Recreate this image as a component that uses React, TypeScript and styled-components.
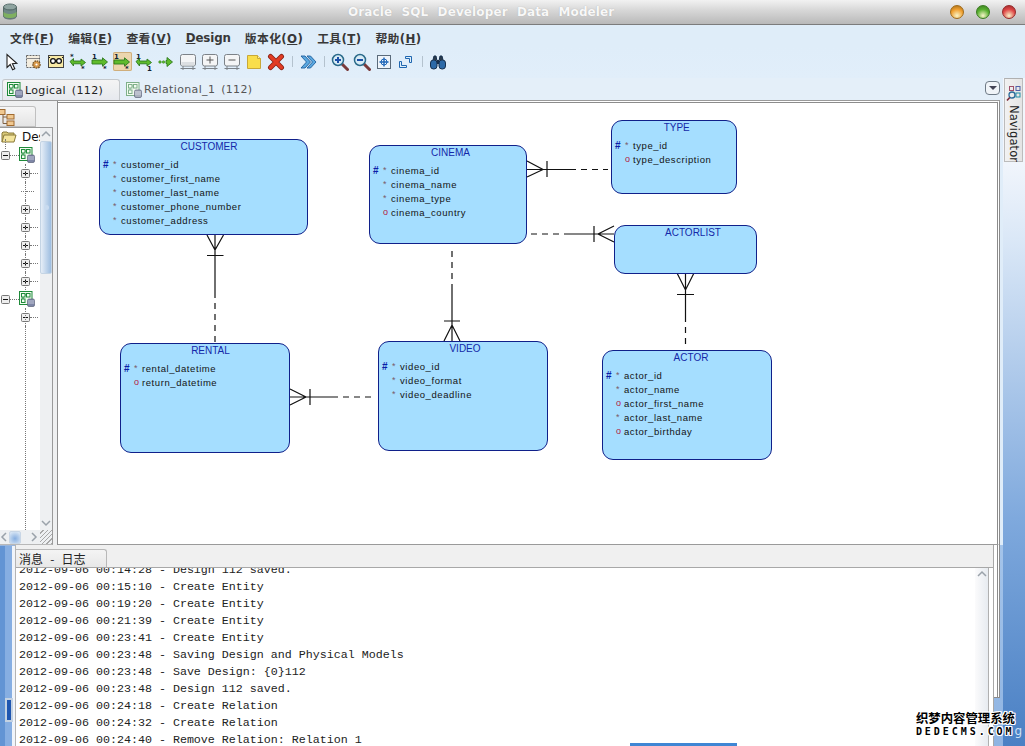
import React from "react";
import styled, { createGlobalStyle } from "styled-components";

const Global = createGlobalStyle`
  html, body { margin: 0; padding: 0; background: #e0edf9; overflow: hidden; }
  * { box-sizing: border-box; }
  svg { flex: none; }
`;

const Window = styled.div`
  position: relative;
  width: 1025px;
  height: 746px;
  overflow: hidden;
  display: flex;
  flex-direction: column;
  font-family: "DejaVu Sans", "Noto Sans CJK SC", sans-serif;
  background: #e0edf9;
`;

const TitleBar = styled.header`
  height: 25px;
  flex: none;
  display: flex;
  align-items: center;
  padding: 0 9px 1px 2px;
  background: linear-gradient(#f2f2f2, #d6d6d6 45%, #b9b9b9);
  border-bottom: 1px solid #7c7c7c;
`;
const TitleText = styled.div`
  margin-left: 330px;
  font-size: 12px;
  font-weight: 700;
  letter-spacing: 0.12px;
  word-spacing: 4.9px;
  color: #f8f8f8;
  text-shadow: 0 0 1px #a8a8a8;
  white-space: pre;
`;
const WindowButtons = styled.div`
  margin-left: auto;
  display: flex;
  gap: 12px;
`;
const WindowButton = styled.span<{ $c: string; $d: string }>`
  width: 14px;
  height: 14px;
  border-radius: 50%;
  border: 1px solid ${(p) => p.$d};
  background: radial-gradient(circle at 50% 80%, #f8f4c8 0, ${(p) => p.$c} 55%, ${(p) => p.$d} 100%);
`;

const MenuBar = styled.nav`
  height: 22px;
  flex: none;
  display: flex;
  align-items: center;
  gap: 14px;
  padding: 3px 0 0 10px;
  background: #dfedf9;
`;
const MenuItem = styled.span<{ $latin?: boolean }>`
  font-size: 11.8px;
  font-weight: 700;
  color: #383838;
  white-space: pre;
  letter-spacing: ${(p) => (p.$latin ? "-0.1px" : "0.35px")};
`;

const ToolBar = styled.div`
  height: 31px;
  flex: none;
  display: flex;
  align-items: center;
  padding: 0 0 2px 1px;
  background: linear-gradient(#dfedf9, #e1eefa);
`;
const ToolSlot = styled.div`
  width: 22px;
  height: 29px;
  display: flex;
  align-items: center;
  justify-content: center;
`;
const ToolFace = styled.div<{ $active?: boolean }>`
  width: 19px;
  height: 19px;
  display: flex;
  align-items: center;
  justify-content: center;
  border-radius: 2px;
  background: ${(p) => (p.$active ? "#ecd6ae" : "transparent")};
  box-shadow: ${(p) => (p.$active ? "inset 0 0 0 1px #cfae7c" : "none")};
`;
const ToolSep = styled.div`
  width: 10px;
  display: flex;
  justify-content: center;
  &::before {
    content: "";
    width: 1px;
    height: 11px;
    background: #b4c2ce;
  }
`;

const Workspace = styled.div`
  flex: 1;
  min-height: 0;
  display: flex;
`;
const Main = styled.div`
  width: 1003px;
  flex: none;
  display: flex;
  flex-direction: column;
`;
const TabRow = styled.div`
  height: 23px;
  flex: none;
  width: 1000px;
  display: flex;
  align-items: flex-end;
  padding-left: 2px;
  background: #e4eff9;
  border-bottom: 1px solid #9a9a9a;
`;
const DocTab = styled.div<{ $active?: boolean }>`
  height: 21px;
  display: flex;
  align-items: center;
  gap: 2px;
  padding: 0 ${(p) => (p.$active ? "20px" : "10px")} 0 ${(p) => (p.$active ? "4px" : "6px")};
  width: ${(p) => (p.$active ? "118px" : "auto")};
  margin-right: ${(p) => (p.$active ? "0" : "auto")};
  font-size: 11px;
  letter-spacing: 0.35px;
  word-spacing: 2px;
  white-space: pre;
  color: ${(p) => (p.$active ? "#222" : "#555")};
  background: ${(p) => (p.$active ? "linear-gradient(#f4f4f4, #e6e9ee)" : "transparent")};
  border: ${(p) => (p.$active ? "1px solid #c4c8cc" : "0")};
  border-bottom: 0;
  border-radius: 3px 3px 0 0;
`;
const DropButton = styled.div`
  width: 15px;
  height: 14px;
  margin: 0 0 5px 0;
  display: flex;
  align-items: center;
  justify-content: center;
  border: 1px solid #6e7a86;
  border-radius: 4px;
  background: #f0f4f8;
  &::before {
    content: "";
    border-style: solid;
    border-width: 4px 4px 0 4px;
    border-color: #445 transparent transparent transparent;
  }
`;

const TopArea = styled.div`
  height: 444px;
  flex: none;
  display: flex;
`;
const NavPanel = styled.aside`
  width: 58px;
  flex: none;
  display: flex;
  flex-direction: column;
  background: #eff0f1;
  border-right: 1px solid #8e8e8e;
`;
const NavTabs = styled.div`
  height: 26px;
  flex: none;
  padding-top: 5px;
`;
const NavTab = styled.div`
  width: 36px;
  height: 21px;
  padding-top: 2px;
  background: linear-gradient(#f6f6f6, #e4e4e4);
  border: 1px solid #c0c0c0;
  border-left: 0;
  border-radius: 0 3px 0 0;
`;
const NavFrame = styled.div`
  width: 53px;
  flex: 1;
  min-height: 0;
  display: grid;
  grid-template-columns: 40px 12px;
  grid-template-rows: 1fr 14px;
  border-top: 1px solid #9a9a9a;
  border-right: 1px solid #9a9a9a;
  border-bottom: 1px solid #b8b8b8;
`;
const Tree = styled.div`
  display: flex;
  flex-direction: column;
  overflow: hidden;
  background: #fff;
`;
const TreeRow = styled.div<{ $indent?: number; $guide?: boolean; $stem?: boolean }>`
  position: relative;
  height: 18px;
  flex: none;
  display: flex;
  align-items: center;
  padding-left: ${(p) => (p.$indent ? 21 : 1)}px;
  white-space: nowrap;
  font-size: 12px;
  color: #111;
  &::before {
    content: ${(p) => (p.$guide ? '""' : "none")};
    position: absolute;
    left: 25px;
    top: 0;
    bottom: 0;
    border-left: 1px dotted #777;
  }
  &::after {
    content: ${(p) => (p.$stem ? '""' : "none")};
    position: absolute;
    left: 5px;
    top: -7px;
    height: 10px;
    border-left: 1px dotted #777;
  }
`;
const TreeGuide = styled.div`
  flex: 1;
  margin-left: 25px;
  border-left: 1px dotted #777;
`;
const Dots = styled.span<{ $w?: number }>`
  width: ${(p) => p.$w ?? 8}px;
  flex: none;
  height: 0;
  border-top: 1px dotted #777;
`;
const FolderLabel = styled.span`
  margin-left: 5px;
`;
const VScroll = styled.div`
  display: flex;
  flex-direction: column;
  background: #eef0f2;
`;
const ArrowCell = styled.div<{ $w?: number }>`
  height: 13px;
  width: ${(p) => (p.$w ? `${p.$w}px` : "auto")};
  flex: none;
  display: flex;
  align-items: center;
  justify-content: center;
`;
const VThumb = styled.div`
  height: 133px;
  flex: none;
  display: flex;
  align-items: center;
  justify-content: center;
  background: linear-gradient(90deg, #e6eef7, #9dbde0);
  border: 1px solid #c4d4e4;
  border-radius: 2px;
  &::before {
    content: "";
    width: 5px;
    height: 5px;
    border-radius: 50%;
    background: #c9dbef;
  }
`;
const VTrack = styled.div`
  flex: 1;
`;
const HScroll = styled.div`
  grid-column: 1 / 2;
  display: flex;
  align-items: center;
  background: #eef0f2;
`;
const HThumb = styled.div`
  width: 12px;
  height: 13px;
  flex: none;
  background: radial-gradient(circle at 50% 60%, #86aee0, #d6e4f4 85%);
  border: 1px solid #c8d6e6;
  border-radius: 2px;
`;
const HTrack = styled.div`
  width: 8px;
  flex: none;
`;
const Grip = styled.div`
  background: repeating-linear-gradient(135deg, #eef0f2 0 2px, #a8a8a8 2px 3px);
`;

const Canvas = styled.main`
  position: relative;
  flex: 1;
  min-width: 0;
  width: 0;
  margin-right: 3px;
  background: #fff;
  border-top: 1px solid #fff;
  border-right: 3px double #8c8c8c;
  border-bottom: 1px solid #9a9a9a;
  box-shadow: inset 0 1px #8c8c8c;
  overflow: hidden;
`;
const Links = styled.svg`
  position: absolute;
  left: 0;
  top: 0;
`;
const Entity = styled.div<{ $x: number; $y: number; $w: number; $h: number }>`
  position: absolute;
  left: ${(p) => p.$x}px;
  top: ${(p) => p.$y}px;
  width: ${(p) => p.$w}px;
  height: ${(p) => p.$h}px;
  background: #a5deff;
  border: 1px solid #10208a;
  border-radius: 11px;
  font-family: "Liberation Sans", Arial, sans-serif;
`;
const EntityTitle = styled.div<{ $shift: number }>`
  height: 13px;
  line-height: 13px;
  margin-bottom: 4px;
  text-align: center;
  padding-left: ${(p) => p.$shift * 2}px;
  font-size: 10px;
  color: #1428a8;
`;
const AttrRow = styled.div`
  height: 14px;
  display: grid;
  grid-template-columns: 10px 8px 1fr;
  align-items: center;
  padding-left: 3px;
  font-size: 9.5px;
  letter-spacing: 0.58px;
  color: #141414;
  white-space: nowrap;
`;
const KeyMark = styled.span`
  font-size: 10px;
  font-weight: 700;
  letter-spacing: 0;
  color: #0c1ea8;
`;
const ReqMark = styled.span<{ $optional: boolean }>`
  font-size: 9px;
  letter-spacing: 0;
  color: ${(p) => (p.$optional ? "#b3203f" : "#7a5a6a")};
`;

const BottomArea = styled.div`
  flex: 1;
  min-height: 0;
  display: flex;
`;
const LeftGutter = styled.div`
  position: relative;
  width: 15px;
  flex: none;
  background: linear-gradient(90deg, #6294d4 0 5px, #86aee2 5px 12px, #f0f4fa 12px);
  border-top: 1px solid #9ab6dc;
`;
const GutterThumb = styled.div`
  position: absolute;
  left: 7px;
  top: 154px;
  width: 4px;
  height: 20px;
  background: #1f56b0;
  box-shadow: 0 0 0 2px #c4d2e2;
`;
const LogPanel = styled.section`
  width: 979px;
  flex: none;
  display: flex;
  flex-direction: column;
  background: #fff;
  border-left: 1px solid #b4b4b4;
  border-right: 1px solid #a8a8a8;
`;
const LogHeader = styled.div`
  height: 23px;
  flex: none;
  padding-top: 4px;
  background: #f0f0f0;
  border-bottom: 1px solid #a8a8a8;
  position: relative;
  z-index: 1;
`;
const LogTab = styled.div`
  width: 91px;
  height: 18px;
  line-height: 18px;
  padding-left: 3px;
  font-family: "Noto Sans CJK SC", sans-serif;
  font-size: 12px;
  word-spacing: 4.5px;
  white-space: pre;
  color: #222;
  background: linear-gradient(#f4f4f4, #e8e8e8);
  border-top: 1px solid #b8b8b8;
  border-right: 1px solid #b8b8b8;
  border-radius: 0 3px 0 0;
`;
const LogBody = styled.div`
  flex: 1;
  min-height: 0;
  display: flex;
  overflow: hidden;
  padding-right: 4px;
`;
const LogList = styled.div`
  flex: 1;
  min-width: 0;
  margin-top: -6px;
  padding-left: 3px;
  font-family: "Liberation Mono", "Courier New", monospace;
  font-size: 11.67px;
  line-height: 17px;
  color: #222;
  white-space: pre;
`;
const LogScroll = styled.div`
  width: 14px;
  flex: none;
  background: linear-gradient(90deg, #fbfbfc, #e7ebf0);
  border-right: 1px solid #b0b0b0;
`;
const RightGutter = styled.div`
  flex: 1;
  background: linear-gradient(#a4c4ea, #8fb4e2);
`;
const FrameEnd = styled.div`
  width: 6px;
  height: 153px;
  background: #fff;
  border-right: 3px double #8c8c8c;
  border-bottom: 1px solid #8c8c8c;
`;
const SideStrip = styled.aside`
  flex: 1;
  display: flex;
  flex-direction: column;
  align-items: flex-start;
  background: linear-gradient(#f2f6fc 80px, #dbe8f7 160px, #7fa9dd 440px, #4a80c4 668px);
`;
const NavigatorTab = styled.div`
  width: 19px;
  height: 84px;
  margin-left: 1px;
  display: flex;
  flex-direction: column;
  align-items: center;
  padding-top: 6px;
  gap: 3px;
  background: linear-gradient(90deg, #f2f2f2, #e4e4e4);
  border: 1px solid #bcbcbc;
  border-top-color: #b0b0b0;
`;
const NavigatorLabel = styled.span`
  writing-mode: vertical-rl;
  font-size: 11.5px;
  letter-spacing: 0.1px;
  color: #222;
`;

const BlueSliver = styled.div`
  position: absolute;
  left: 630px;
  bottom: 0;
  width: 107px;
  height: 3px;
  background: #3f86d4;
  z-index: 3;
`;
const Watermark = styled.div`
  position: absolute;
  right: 10px;
  bottom: 8px;
  z-index: 4;
  display: flex;
  flex-direction: column;
  align-items: flex-start;
  line-height: 13px;
  color: #000;
  text-shadow: 1px 0 #fff, -1px 0 #fff, 0 1px #fff, 0 -1px #fff, 1px 1px #fff, -1px -1px #fff, 1px -1px #fff, -1px 1px #fff;
`;
const WatermarkCn = styled.span`
  font-family: "Noto Sans CJK SC", sans-serif;
  font-size: 12.4px;
  font-weight: 700;
`;
const WatermarkEn = styled.span`
  font-family: "DejaVu Sans Mono", monospace;
  font-size: 10px;
  font-weight: 700;
  letter-spacing: 2.95px;
`;
const Stray = styled.span`
  position: absolute;
  right: 3px;
  bottom: 8px;
  z-index: 3;
  font-size: 12px;
  color: #cfe0f4;
`;

/* ---------- icons ---------- */
const S = ({ children, size = 18 }: { children: React.ReactNode; size?: number }) => (
  <svg width={size} height={size} viewBox="0 0 18 18" fill="none">
    {children}
  </svg>
);

const AppIcon = () => (
  <svg width="16" height="18" viewBox="0 0 16 18">
    <ellipse cx="8" cy="4" rx="6.5" ry="3" fill="#8fa4a0" stroke="#5c7270" />
    <path d="M1.5 4v9c0 2 3 3 6.5 3s6.5-1 6.5-3V4c0 2-3 3-6.5 3S1.5 6 1.5 4z" fill="#6f8886" stroke="#566a68" />
    <path d="M1.5 8c0 2 3 3 6.5 3s6.5-1 6.5-3v4c0 2-3 3-6.5 3s-6.5-1-6.5-3z" fill="#7fb060" />
  </svg>
);

const ModelIcon = ({ muted }: { muted?: boolean }) => {
  const g = muted ? "#7fb08a" : "#1f8a3a";
  return (
    <svg width="16" height="16" viewBox="0 0 16 16" fill="none">
      <rect x="0.5" y="0.5" width="12.5" height="13" fill="#f2fbf0" stroke={g} />
      <rect x="2.5" y="2.5" width="3.5" height="3.5" stroke={g} />
      <rect x="7.5" y="2.5" width="3.5" height="3.5" stroke={g} />
      <rect x="2.5" y="8" width="3.5" height="3.5" stroke={g} />
      <path d="M6 4h1.5M4 6v2" stroke={g} />
      <rect x="8.5" y="8" width="7" height="7.5" rx="1.5" fill={muted ? "#a9b0bd" : "#7e86a6"} stroke="#5a6078" strokeWidth="0.7" />
      <path d="M8.8 10h6.4M8.8 12h6.4" stroke="#dfe2ec" strokeWidth="0.7" />
    </svg>
  );
};

const Folder = () => (
  <svg width="16" height="14" viewBox="0 0 16 14">
    <path d="M1 12V3l1-1h4l1 1h6v2" fill="#d8c878" stroke="#8a7a3a" />
    <path d="M1 12l2-7h12l-2 7z" fill="#f3e49c" stroke="#8a7a3a" />
  </svg>
);

const Expander = ({ open }: { open?: boolean }) => (
  <svg width="9" height="9" viewBox="0 0 9 9">
    <rect x="0.5" y="0.5" width="8" height="8" rx="1" fill="#eee" stroke="#777" />
    <path d={open ? "M2 4.5h5" : "M2 4.5h5M4.5 2v5"} stroke="#111" />
  </svg>
);

const Chevron = ({ dir }: { dir: "up" | "down" | "left" | "right" }) => {
  const d = {
    up: "M1 6l4-4 4 4",
    down: "M1 2l4 4 4-4",
    left: "M6 1L2 5l4 4",
    right: "M3 1l4 4-4 4",
  }[dir];
  return (
    <svg width="10" height="10" viewBox="0 0 10 10" fill="none">
      <path d={d} stroke="#9aa2aa" strokeWidth="1.5" />
    </svg>
  );
};

const Tiny = ({ x, y, t }: { x: number; y: number; t: string }) => (
  <text x={x} y={y} fontSize="7" fontFamily="DejaVu Sans" fontWeight="700" fill="#123">
    {t}
  </text>
);

const GREEN = "#5fbb2c";
const GEDGE = "#2c7a1e";

const RelIcon = ({ a, b, both }: { a: string; b: string; both?: boolean }) => (
  <S>
    <Tiny x={1} y={6} t={a} />
    <Tiny x={12} y={17.5} t={b} />
    <path
      d={
        both
          ? "M1 8.5l3.5-3V8h7.5V6l4.5 3.5-4.5 3.5v-2.2h-7.5V13z"
          : "M1 7h10.5V4.8l5 4.2-5 4.2V11H1z"
      }
      fill={GREEN}
      stroke={GEDGE}
      strokeWidth="0.9"
    />
  </S>
);

const DotArrow = () => (
  <S>
    <circle cx="3" cy="9" r="1.3" fill={GREEN} stroke={GEDGE} strokeWidth="0.5" />
    <circle cx="6.5" cy="9" r="1.3" fill={GREEN} stroke={GEDGE} strokeWidth="0.5" />
    <path d="M9 7.5h1V4.5L15.5 9 10 13.5v-3H9z" fill={GREEN} stroke={GEDGE} strokeWidth="0.9" />
  </S>
);

const TableIcon = ({ sign }: { sign?: "+" | "-" }) => (
  <S>
    <rect x="1.5" y="1.5" width="15" height="11.5" rx="2" fill="#f4f5f6" stroke="#7c8288" />
    <path d="M4 13v4M14 13v4M1.5 15.5h15" stroke="#7c8288" />
    {sign && <path d={sign === "+" ? "M5.5 7h7M9 3.5v7" : "M5.5 7h7"} stroke="#555" />}
    {!sign && <rect x="2.5" y="9" width="13" height="3.5" fill="#dcdfe2" />}
  </S>
);

const toolbar: (React.ReactNode | "sep")[] = [
  <S key="a">
    <path d="M4 1.5v13l3.2-3 2.4 5.2 2.2-1-2.4-5 4.4-.3z" fill="#fff" stroke="#222" strokeWidth="1.1" />
  </S>,
  <S key="b">
    <rect x="1.5" y="2.5" width="13" height="12" fill="#f4eee0" stroke="#666" strokeDasharray="2 1" />
    <path d="M2 5.5h12" stroke="#888" />
    <circle cx="11.5" cy="11.5" r="3.6" fill="#d99a4a" stroke="#7a5a30" strokeDasharray="1.6 0.8" strokeWidth="1.4" />
    <circle cx="11.5" cy="11.5" r="1.1" fill="#fff" />
  </S>,
  <S key="c">
    <rect x="1.5" y="2.5" width="15" height="12" fill="#f8eaa6" stroke="#444" />
    <circle cx="6" cy="8" r="2.4" fill="#fff" stroke="#111" strokeWidth="1.3" />
    <circle cx="12" cy="8" r="2.4" fill="#fff" stroke="#111" strokeWidth="1.3" />
    <path d="M8.4 8h1.2M3 5l-1-1M15 5l1-1" stroke="#111" />
  </S>,
  <RelIcon key="d" a="*" b="*" both />,
  <RelIcon key="e" a="1" b="*" />,
  <RelIcon key="f" a="1" b="*" />,
  <RelIcon key="g" a="1" b="1" both />,
  <DotArrow key="h" />,
  <TableIcon key="i" />,
  <TableIcon key="j" sign="+" />,
  <TableIcon key="k" sign="-" />,
  <S key="l">
    <path d="M2.5 2.5h10l3 3v10h-13z" fill="#f9de4b" stroke="#c8a838" />
    <path d="M12.5 2.5v3h3" fill="#fff1a0" stroke="#c8a838" />
  </S>,
  <S key="m">
    <path d="M3.5 3.5l11 11M14.5 3.5l-11 11" stroke="#8a2418" strokeWidth="5" strokeLinecap="round" />
    <path d="M3.5 3.5l11 11M14.5 3.5l-11 11" stroke="#e23c24" strokeWidth="3.2" strokeLinecap="round" />
  </S>,
  "sep",
  <S key="n">
    <path d="M2 3l5.5 6L2 15h4l5.5-6L6 3zM8 3l5.5 6L8 15h3.5L17 9l-5.5-6z" fill="#5aa8e0" stroke="#1f5f9c" strokeWidth="0.9" />
  </S>,
  "sep",
  <S key="o">
    <path d="M10.5 10.5l6 6" stroke="#7a3a3a" strokeWidth="3" strokeLinecap="round" />
    <circle cx="7" cy="7" r="5.5" fill="#d8ecf6" stroke="#2a6a8a" strokeWidth="1.5" />
    <path d="M4 7h6M7 4v6" stroke="#1c50a8" strokeWidth="2" />
  </S>,
  <S key="p">
    <path d="M10.5 10.5l6 6" stroke="#7a3a3a" strokeWidth="3" strokeLinecap="round" />
    <circle cx="7" cy="7" r="5.5" fill="#d8ecf6" stroke="#2a6a8a" strokeWidth="1.5" />
    <path d="M4 7h6" stroke="#1c50a8" strokeWidth="2" />
  </S>,
  <S key="q">
    <rect x="2.5" y="2.5" width="13" height="13" fill="#eef4fa" stroke="#5a6a7a" />
    <path d="M4.5 9h9M9 4.5v9" stroke="#1f66b8" strokeWidth="1.4" />
    <circle cx="9" cy="9" r="3" stroke="#1f66b8" />
  </S>,
  <S key="r">
    <path d="M8.5 3.5h6v6h-2V5.5h-4zM2.5 8.5h2v4h5v2h-7z" fill="#dff0fb" stroke="#1f66b0" />
  </S>,
  "sep",
  <S key="s">
    <rect x="1.5" y="7" width="6.5" height="9" rx="3" fill="#2c6aa8" stroke="#16304e" />
    <rect x="10" y="7" width="6.5" height="9" rx="3" fill="#2c6aa8" stroke="#16304e" />
    <path d="M4 7l1-4h2l1 5h2l1-5h2l1 4" fill="#2a3a4a" stroke="#16304e" />
    <rect x="8" y="8" width="2" height="3" fill="#16304e" />
  </S>,
];

const NavigatorIcon = () => (
  <svg width="16" height="17" viewBox="0 0 16 17" fill="none">
    <rect x="3.5" y="1.5" width="4" height="4" stroke="#a0506a" />
    <rect x="10" y="1.5" width="4" height="4" stroke="#5060a8" />
    <rect x="10" y="8" width="4" height="4" stroke="#2090a8" />
    <circle cx="6" cy="10" r="3" stroke="#2a6a9a" strokeWidth="1.3" />
    <path d="M3.8 12.5L1 15.5" stroke="#7a2a3a" strokeWidth="1.6" />
  </svg>
);

const NavTreeIcon = () => (
  <svg width="16" height="18" viewBox="0 0 16 18" fill="none">
    <rect x="-1" y="0.5" width="6" height="5" fill="#f0c890" stroke="#a06a30" />
    <rect x="7" y="5.5" width="7" height="4.5" fill="#f0c890" stroke="#a06a30" />
    <rect x="7" y="12" width="7" height="4.5" fill="#f0c890" stroke="#a06a30" />
    <path d="M3 5.5v9h4M3 8h4" stroke="#806040" />
  </svg>
);

/* ---------- data ---------- */
type Attr = { key?: boolean; opt?: boolean; name: string };
type Ent = { name: string; x: number; y: number; w: number; h: number; shift: number; attrs: Attr[] };

const entities: Ent[] = [
  {
    name: "CUSTOMER", x: 99, y: 139, w: 209, h: 96, shift: 5.5,
    attrs: [
      { key: true, name: "customer_id" },
      { name: "customer_first_name" },
      { name: "customer_last_name" },
      { name: "customer_phone_number" },
      { name: "customer_address" },
    ],
  },
  {
    name: "CINEMA", x: 369, y: 145, w: 158, h: 99, shift: 2.5,
    attrs: [
      { key: true, name: "cinema_id" },
      { name: "cinema_name" },
      { name: "cinema_type" },
      { opt: true, name: "cinema_country" },
    ],
  },
  {
    name: "TYPE", x: 611, y: 120, w: 126, h: 74, shift: 2.7,
    attrs: [{ key: true, name: "type_id" }, { opt: true, name: "type_description" }],
  },
  { name: "ACTORLIST", x: 614, y: 225, w: 143, h: 49, shift: 7.5, attrs: [] },
  {
    name: "RENTAL", x: 120, y: 343, w: 170, h: 110, shift: 5.5,
    attrs: [{ key: true, name: "rental_datetime" }, { opt: true, name: "return_datetime" }],
  },
  {
    name: "VIDEO", x: 378, y: 341, w: 170, h: 110, shift: 2,
    attrs: [{ key: true, name: "video_id" }, { name: "video_format" }, { name: "video_deadline" }],
  },
  {
    name: "ACTOR", x: 602, y: 350, w: 170, h: 110, shift: 4,
    attrs: [
      { key: true, name: "actor_id" },
      { name: "actor_name" },
      { opt: true, name: "actor_first_name" },
      { name: "actor_last_name" },
      { opt: true, name: "actor_birthday" },
    ],
  },
];

const solid = [
  "M207 235L215 250L223.5 235M215 235V292M207 255.5H223.5",
  "M527 161L543 169.5L527 177M527 169.5H570M547 161V177",
  "M614 226L598 234L614 242M614 234H570M594 226V242",
  "M677 273L685.5 290L694 273M685.5 273V316M677 294.5H694",
  "M444 341L452 325L460 341M452 341V290M444 321H460",
  "M290 389L306 397L290 405M290 397H332M310 389V405",
];
const dashed = ["M215 292V342", "M570 169.5H608", "M570 234H530", "M685.5 316V348", "M452 290V248", "M332 397H376"];

const logLines = [
  "2012-09-06 00:14:28 - Design 112 saved.",
  "2012-09-06 00:15:10 - Create Entity",
  "2012-09-06 00:19:20 - Create Entity",
  "2012-09-06 00:21:39 - Create Entity",
  "2012-09-06 00:23:41 - Create Entity",
  "2012-09-06 00:23:48 - Saving Design and Physical Models",
  "2012-09-06 00:23:48 - Save Design: {0}112",
  "2012-09-06 00:23:48 - Design 112 saved.",
  "2012-09-06 00:24:18 - Create Relation",
  "2012-09-06 00:24:32 - Create Relation",
  "2012-09-06 00:24:40 - Remove Relation: Relation 1",
];

const menus: [string, string, string][] = [
  ["文件(", "F", ")"],
  ["编辑(", "E", ")"],
  ["查看(", "V", ")"],
  ["", "D", "esign"],
  ["版本化(", "O", ")"],
  ["工具(", "T", ")"],
  ["帮助(", "H", ")"],
];

export default function App() {
  return (
    <Window>
      <Global />
      <TitleBar>
        <AppIcon />
        <TitleText>Oracle SQL Developer Data Modeler</TitleText>
        <WindowButtons>
          <WindowButton $c="#f0a030" $d="#a06a18" />
          <WindowButton $c="#58b030" $d="#3a7a20" />
          <WindowButton $c="#e04848" $d="#962828" />
        </WindowButtons>
      </TitleBar>

      <MenuBar>
        {menus.map(([a, m, b]) => (
          <MenuItem key={a + m} $latin={a === ""}>
            {a}
            <u>{m}</u>
            {b}
          </MenuItem>
        ))}
      </MenuBar>

      <ToolBar>
        {toolbar.map((item, i) =>
          item === "sep" ? (
            <ToolSep key={`s${i}`} />
          ) : (
            <ToolSlot key={i}>
              <ToolFace $active={i === 5}>{item}</ToolFace>
            </ToolSlot>
          )
        )}
      </ToolBar>

      <Workspace>
        <Main>
          <TabRow>
            <DocTab $active>
              <ModelIcon />
              Logical (112)
            </DocTab>
            <DocTab>
              <ModelIcon muted />
              Relational_1 (112)
            </DocTab>
            <DropButton />
          </TabRow>

          <TopArea>
            <NavPanel>
              <NavTabs>
                <NavTab>
                  <NavTreeIcon />
                </NavTab>
              </NavTabs>
              <NavFrame>
                <Tree>
                  <TreeRow>
                    <Folder />
                    <FolderLabel>Design</FolderLabel>
                  </TreeRow>
                  <TreeRow $stem>
                    <Expander open />
                    <Dots $w={9} />
                    <ModelIcon />
                  </TreeRow>
                  <TreeRow $indent={1} $guide>
                    <Expander />
                    <Dots />
                  </TreeRow>
                  <TreeRow $indent={1} $guide>
                    <Dots $w={5} />
                    <Dots $w={8} />
                  </TreeRow>
                  {[0, 1, 2, 3, 4].map((k) => (
                    <TreeRow key={k} $indent={1} $guide>
                      <Expander />
                      <Dots />
                    </TreeRow>
                  ))}
                  <TreeRow>
                    <Expander open />
                    <Dots $w={9} />
                    <ModelIcon />
                  </TreeRow>
                  <TreeRow $indent={1} $guide>
                    <Expander open />
                    <Dots />
                  </TreeRow>
                  <TreeGuide />
                </Tree>
                <VScroll>
                  <ArrowCell>
                    <Chevron dir="up" />
                  </ArrowCell>
                  <VThumb />
                  <VTrack />
                  <ArrowCell>
                    <Chevron dir="down" />
                  </ArrowCell>
                </VScroll>
                <HScroll>
                  <ArrowCell $w={9}>
                    <Chevron dir="left" />
                  </ArrowCell>
                  <HThumb />
                  <HTrack />
                  <ArrowCell $w={10}>
                    <Chevron dir="right" />
                  </ArrowCell>
                </HScroll>
                <Grip />
              </NavFrame>
            </NavPanel>

            <Canvas>
              <Links width="942" height="444" viewBox="58 102 942 444" fill="none">
                {solid.map((d) => (
                  <path key={d} d={d} stroke="#111" strokeWidth="1.2" />
                ))}
                {dashed.map((d) => (
                  <path key={d} d={d} stroke="#111" strokeWidth="1.2" strokeDasharray="6 5" />
                ))}
              </Links>
              {entities.map((e) => (
                <Entity key={e.name} $x={e.x - 58} $y={e.y - 102} $w={e.w} $h={e.h}>
                  <EntityTitle $shift={e.shift}>{e.name}</EntityTitle>
                  {e.attrs.map((a) => (
                    <AttrRow key={a.name}>
                      <KeyMark>{a.key ? "#" : ""}</KeyMark>
                      <ReqMark $optional={!!a.opt}>{a.opt ? "o" : "*"}</ReqMark>
                      <span>{a.name}</span>
                    </AttrRow>
                  ))}
                </Entity>
              ))}
            </Canvas>
          </TopArea>

          <BottomArea>
            <LeftGutter>
              <GutterThumb />
            </LeftGutter>
            <LogPanel>
              <LogHeader>
                <LogTab>消息 - 日志</LogTab>
              </LogHeader>
              <LogBody>
                <LogList>
                  {logLines.map((l, i) => (
                    <div key={i}>{l}</div>
                  ))}
                </LogList>
                <LogScroll>
                  <ArrowCell>
                    <Chevron dir="up" />
                  </ArrowCell>
                </LogScroll>
              </LogBody>
            </LogPanel>
            <RightGutter>
              <FrameEnd />
            </RightGutter>
          </BottomArea>
        </Main>

        <SideStrip>
          <NavigatorTab>
            <NavigatorIcon />
            <NavigatorLabel>Navigator</NavigatorLabel>
          </NavigatorTab>
        </SideStrip>
      </Workspace>

      <BlueSliver />
      <Stray>g</Stray>
      <Watermark>
        <WatermarkCn>织梦内容管理系统</WatermarkCn>
        <WatermarkEn>DEDECMS.COM</WatermarkEn>
      </Watermark>
    </Window>
  );
}
